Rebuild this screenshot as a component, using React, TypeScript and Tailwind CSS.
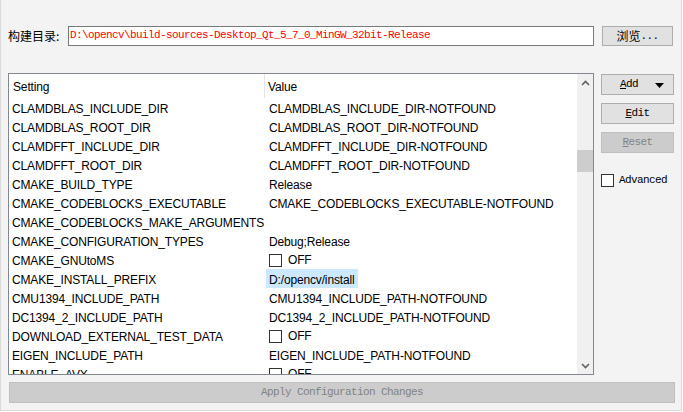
import React from "react";

const rows: { k: string; v: string; type?: "bool" | "sel" }[] = [
  { k: "CLAMDBLAS_INCLUDE_DIR", v: "CLAMDBLAS_INCLUDE_DIR-NOTFOUND" },
  { k: "CLAMDBLAS_ROOT_DIR", v: "CLAMDBLAS_ROOT_DIR-NOTFOUND" },
  { k: "CLAMDFFT_INCLUDE_DIR", v: "CLAMDFFT_INCLUDE_DIR-NOTFOUND" },
  { k: "CLAMDFFT_ROOT_DIR", v: "CLAMDFFT_ROOT_DIR-NOTFOUND" },
  { k: "CMAKE_BUILD_TYPE", v: "Release" },
  { k: "CMAKE_CODEBLOCKS_EXECUTABLE", v: "CMAKE_CODEBLOCKS_EXECUTABLE-NOTFOUND" },
  { k: "CMAKE_CODEBLOCKS_MAKE_ARGUMENTS", v: "" },
  { k: "CMAKE_CONFIGURATION_TYPES", v: "Debug;Release" },
  { k: "CMAKE_GNUtoMS", v: "OFF", type: "bool" },
  { k: "CMAKE_INSTALL_PREFIX", v: "D:/opencv/install", type: "sel" },
  { k: "CMU1394_INCLUDE_PATH", v: "CMU1394_INCLUDE_PATH-NOTFOUND" },
  { k: "DC1394_2_INCLUDE_PATH", v: "DC1394_2_INCLUDE_PATH-NOTFOUND" },
  { k: "DOWNLOAD_EXTERNAL_TEST_DATA", v: "OFF", type: "bool" },
  { k: "EIGEN_INCLUDE_PATH", v: "EIGEN_INCLUDE_PATH-NOTFOUND" },
  { k: "ENABLE_AVX", v: "OFF", type: "bool" },
];

const mono = "font-['Liberation_Mono',monospace] text-[11px] tracking-[-0.6px]";

function Chevron({ down }: { down?: boolean }) {
  return (
    <svg width="9" height="6" viewBox="0 0 9 6">
      <polyline
        points={down ? "1,1 4.5,4.5 8,1" : "1,5 4.5,1.5 8,5"}
        fill="none"
        stroke="#606060"
        strokeWidth="1.6"
      />
    </svg>
  );
}

function Box() {
  return <span className="block w-[13px] h-[13px] border border-[#333333] bg-white shrink-0" />;
}

export default function App() {
  return (
    <div className="w-[683px] h-[412px] bg-white">
      <div className="w-[682px] h-[411px] bg-[#f3f3f3] border-l border-r border-b border-[#dadada] flex flex-col text-black">
        {/* top row */}
        <div className="flex items-center pl-[7px] pt-[25px] h-[46px]">
          <span className="w-[60px] text-[12px] font-['Noto_Sans_CJK_SC',sans-serif] leading-none">构建目录:</span>
          <div className="w-[526px] h-[20px] border border-[#7a7a7a] bg-white flex items-center pl-[1px] overflow-hidden">
            <span className={`${mono} text-[#ff0000] whitespace-nowrap`}>
              D:\opencv\build-sources-Desktop_Qt_5_7_0_MinGW_32bit-Release
            </span>
          </div>
          <div className="ml-[8px] mt-[1px] w-[71px] h-[20px] bg-[#e1e1e1] border border-[#adadad] flex items-center justify-center">
            <span className="text-[12px] font-['Noto_Sans_CJK_SC',sans-serif] leading-none">浏览</span>
            <span className={mono}>...</span>
          </div>
        </div>

        {/* main */}
        <div className="flex pl-[7px] mt-[27px]">
          <div className="w-[586px] h-[302px] border border-[#828790] bg-white flex overflow-hidden font-['Liberation_Sans',Arial,sans-serif] text-[12px] tracking-[-0.15px]">
            <div className="flex-1 flex flex-col overflow-hidden">
              <div className="h-[24px] shrink-0 flex items-center">
                <div className="w-[256px] h-full pl-[4px] pt-[1px] flex items-center border-r border-[#e5e5e5]">Setting</div>
                <div className="pl-[3px] pt-[1px]">Value</div>
              </div>
              {rows.map((r) => (
                <div key={r.k} className="h-[19px] shrink-0 flex items-center">
                  <div className="w-[257px] shrink-0 pl-[3px] pt-[2px] whitespace-nowrap">{r.k}</div>
                  <div className="flex-1 h-full flex items-center whitespace-nowrap">
                    {r.type === "bool" ? (
                      <div className="flex items-center pl-[3px] gap-[6px] pt-[1px]">
                        <Box />
                        <span>{r.v}</span>
                      </div>
                    ) : r.type === "sel" ? (
                      <span className="bg-[#cce8ff] h-full flex items-center px-[3px] pt-[2px]">{r.v}</span>
                    ) : (
                      <span className="pl-[3px] pt-[2px]">{r.v}</span>
                    )}
                  </div>
                </div>
              ))}
            </div>
            <div className="w-[16px] shrink-0 bg-[#f0f0f0] flex flex-col items-center">
              <div className="h-[17px] flex items-center justify-center">
                <Chevron />
              </div>
              <div className="w-full h-[22px] bg-[#cdcdcd] mt-[59px]" />
              <div className="flex-1" />
              <div className="h-[17px] flex items-center justify-center">
                <Chevron down />
              </div>
            </div>
          </div>

          <div className="ml-[7px] w-[73px] flex flex-col">
            <div className={`mt-[1px] h-[21px] bg-[#e1e1e1] border border-[#adadad] flex items-center relative ${mono}`}>
              <span className="ml-[18px]"><u>A</u>dd</span>
              <svg className="absolute right-[9px] top-[8px]" width="9" height="5" viewBox="0 0 9 5">
                <polygon points="0,0 9,0 4.5,5" fill="#000" />
              </svg>
            </div>
            <div className={`mt-[8px] h-[21px] bg-[#e1e1e1] border border-[#adadad] flex items-center justify-center ${mono}`}>
              <span><u>E</u>dit</span>
            </div>
            <div className={`mt-[8px] h-[21px] bg-[#cccccc] border border-[#bfbfbf] flex items-center justify-center text-[#838383] ${mono}`}>
              <span><u>R</u>eset</span>
            </div>
            <div className={`mt-[19px] flex items-center gap-[5px] ${mono}`}>
              <Box />
              <span>Advanced</span>
            </div>
          </div>
        </div>

        <div className={`ml-[8px] mt-[7px] w-[666px] h-[21px] bg-[#cccccc] border border-[#bfbfbf] flex items-center justify-center text-[#838383] ${mono}`}>
          Apply Configuration Changes
        </div>
      </div>
    </div>
  );
}
